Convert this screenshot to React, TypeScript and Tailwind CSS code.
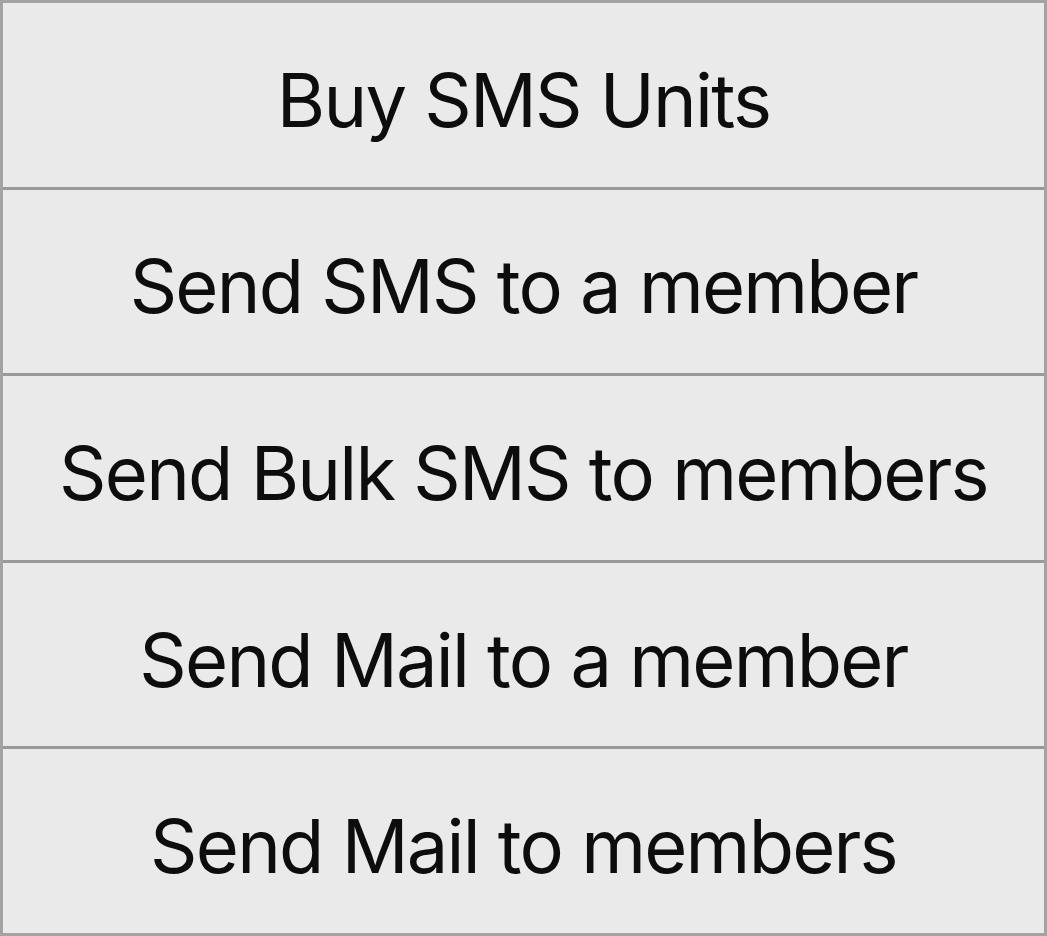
export default function App() {
  const items = [
    "Buy SMS Units",
    "Send SMS to a member",
    "Send Bulk SMS to members",
    "Send Mail to a member",
    "Send Mail to members",
  ];
  return (
    <div className="w-[1047px] h-[936px] bg-[#eaeaea] border-[3px] border-[#a3a3a3] flex flex-col">
      {items.map((t, i) => (
        <div
          key={t}
          className={
            "flex-1 flex items-center justify-center text-[74px] text-[#0d0d0d] " +
            (i < items.length - 1 ? "border-b-[3px] border-[#999999]" : "")
          }
          style={{ fontFamily: "Inter, 'Noto Sans', sans-serif", letterSpacing: "-0.024em" }}
        >
          <span className="leading-none pt-[10px]">{t}</span>
        </div>
      ))}
    </div>
  );
}
